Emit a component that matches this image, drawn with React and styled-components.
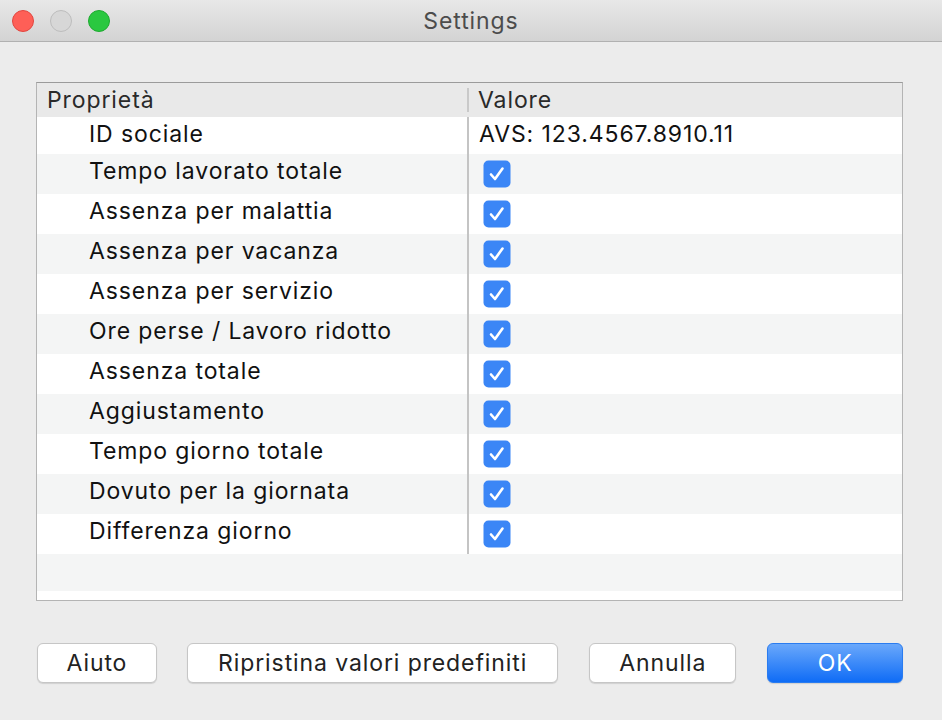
import React from 'react'
import styled, {createGlobalStyle} from 'styled-components'

const font = 'Inter, "Liberation Sans", Arial, sans-serif'

const Global = createGlobalStyle`
  html, body {
    margin: 0;
    padding: 0;
    background: #ececec;
    font-family: ${font};
  }
`

const Window = styled.div`
  width: 942px;
  height: 720px;
  display: flex;
  flex-direction: column;
  background: #ececec;
  overflow: hidden;
  letter-spacing: 0.9px;
`

const TitleBar = styled.div`
  height: 41px;
  display: grid;
  grid-template-columns: 1fr auto 1fr;
  align-items: center;
  background: linear-gradient(#e8e8e8, #d3d3d3);
  border-bottom: 1px solid #b1b1b1;
`

const Lights = styled.div`
  display: flex;
  gap: 16px;
  padding-left: 12px;
`

const Light = styled.span`
  width: 22px;
  height: 22px;
  border-radius: 50%;
  box-sizing: border-box;
  background: ${p => p.$c};
  border: 1px solid ${p => p.$b};
`

const Title = styled.div`
  font-size: 23px;
  color: #4c4c4c;
  padding-top: 1px;
`

const Content = styled.div`
  flex: 1;
  display: flex;
  flex-direction: column;
  padding: 40px 39px 0 36px;
`

const Table = styled.div`
  height: 519px;
  box-sizing: border-box;
  border: 1px solid #b4b4b4;
  border-top-color: #9b9b9b;
  background: #fff;
  display: flex;
  flex-direction: column;
`

const Header = styled.div`
  height: 34px;
  display: grid;
  grid-template-columns: 430px 1fr;
  align-items: center;
  background: #e9e9e9;
  color: #2a2a2a;
  font-size: 23px;
`

const HeadCell = styled.div`
  padding-left: ${p => p.$pad}px;
  height: 24px;
  line-height: 24px;
  border-left: ${p => (p.$sep ? '2px solid #c9c9c9' : 'none')};
`

const Row = styled.div`
  height: ${p => p.$h || 40}px;
  flex: none;
  display: grid;
  grid-template-columns: 430px 1fr;
  background: ${p => (p.$alt ? '#f4f5f5' : '#fff')};
  font-size: 23px;
  color: #111;
`

const Cell = styled.div`
  display: flex;
  align-items: center;
  padding-left: ${p => p.$pad}px;
  padding-bottom: ${p => p.$lift || 0}px;
  border-left: ${p => (p.$sep ? '2px solid #c4c4c4' : 'none')};
`

const Filler = styled.div`
  flex: 1;
  display: flex;
  flex-direction: column;
`

const Buttons = styled.div`
  display: flex;
  gap: 30px;
  margin-top: 42px;
  padding-left: 1px;
`

const Button = styled.button`
  width: ${p => p.$w}px;
  height: 40px;
  box-sizing: border-box;
  border-radius: 6px;
  font-family: ${font};
  font-size: 23px;
  letter-spacing: 0.9px;
  color: #222;
  background: #fff;
  border: 1px solid #c6c6c6;
  box-shadow: 0 1px 1px rgba(0, 0, 0, 0.12);
  padding: 0;
  margin-left: ${p => p.$ml || 0}px;
`

const OkButton = styled(Button)`
  color: #fff;
  border: 1px solid #2a7cf0;
  background: linear-gradient(#6aa8fb, #0f6cf6);
`

const Check = () => (
  <svg width='28' height='28' viewBox='0 0 28 28'>
    <rect x='0.5' y='0.5' width='27' height='27' rx='5' fill='#3b86f6' />
    <path d='M8 14.5 L12 19 L19.5 8.5' fill='none' stroke='#fff' strokeWidth='2.6' strokeLinecap='round' strokeLinejoin='round' />
  </svg>
)

const items = [
  'Tempo lavorato totale',
  'Assenza per malattia',
  'Assenza per vacanza',
  'Assenza per servizio',
  'Ore perse / Lavoro ridotto',
  'Assenza totale',
  'Aggiustamento',
  'Tempo giorno totale',
  'Dovuto per la giornata',
  'Differenza giorno',
]

export default function App() {
  return (
    <Window>
      <Global />
      <TitleBar>
        <Lights>
          <Light $c='#fe5f57' $b='#e2463f' />
          <Light $c='#d7d7d7' $b='#bdbdbd' />
          <Light $c='#2ac840' $b='#1eaa30' />
        </Lights>
        <Title>Settings</Title>
        <div />
      </TitleBar>
      <Content>
        <Table>
          <Header>
            <HeadCell $pad={10}>Proprietà</HeadCell>
            <HeadCell $pad={9} $sep>Valore</HeadCell>
          </Header>
          <Row $h={37}>
            <Cell $pad={52} $lift={4}>ID sociale</Cell>
            <Cell $pad={10} $lift={4} $sep>AVS: 123.4567.8910.11</Cell>
          </Row>
          {items.map((label, i) => (
            <Row key={label} $alt={i % 2 === 0}>
              <Cell $pad={52} $lift={6}>{label}</Cell>
              <Cell $pad={14} $sep><Check /></Cell>
            </Row>
          ))}
          <Filler>
            <Row $alt $h={37} />
          </Filler>
        </Table>
        <Buttons>
          <Button $w={120}>Aiuto</Button>
          <Button $w={372}>Ripristina valori predefiniti</Button>
          <Button $w={147} $ml={1}>Annulla</Button>
          <OkButton $w={136} $ml={1}>OK</OkButton>
        </Buttons>
      </Content>
    </Window>
  )
}
